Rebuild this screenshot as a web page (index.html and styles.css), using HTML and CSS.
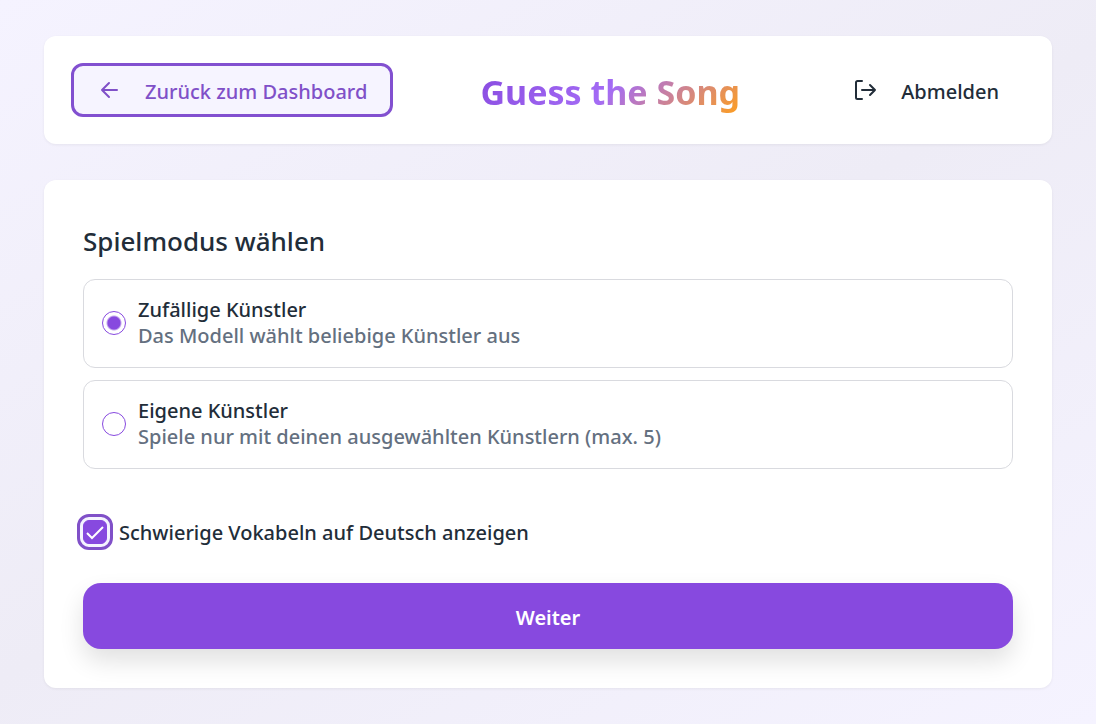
FILE: index.html
```html
<!DOCTYPE html>
<html lang="de">
<head>
  <meta charset="UTF-8">
  <meta name="viewport" content="width=device-width, initial-scale=1.0">
  <title>Guess the Song</title>
  <link rel="stylesheet" href="styles.css">
</head>
<body>
  <!-- Header -->
  <header class="card header">
    <a class="nav-link back-link" href="#dashboard">
      <svg class="icon" viewBox="0 0 24 24" aria-hidden="true">
        <path d="M20 12H5M12 5l-7 7 7 7"/>
      </svg>
      <span>Zurück zum Dashboard</span>
    </a>

    <h1 class="title">Guess the Song</h1>

    <button class="nav-link logout" type="button">
      <svg class="icon" viewBox="0 0 24 24" aria-hidden="true">
        <path d="M9 3H4.500a1.500 1.500 0 0 0-1.500 1.500v15a1.500 1.500 0 0 0 1.500 1.500H9M9 12h13M17 7l5 5-5 5"/>
      </svg>
      <span>Abmelden</span>
    </button>
  </header>

  <!-- Game mode form -->
  <main class="card">
    <form class="mode-form">
      <h2 id="mode-heading">Spielmodus wählen</h2>

      <div class="options" role="radiogroup" aria-labelledby="mode-heading">
        <label class="option" for="mode_random">
          <input class="radio" type="radio" id="mode_random" name="mode" value="random" checked>
          <span class="option-text">
            <span>Zufällige Künstler</span>
            <span class="hint">Das Modell wählt beliebige Künstler aus</span>
          </span>
        </label>

        <label class="option" for="mode_custom">
          <input class="radio" type="radio" id="mode_custom" name="mode" value="custom">
          <span class="option-text">
            <span>Eigene Künstler</span>
            <span class="hint">Spiele nur mit deinen ausgewählten Künstlern (max. 5)</span>
          </span>
        </label>
      </div>

      <div class="vocab">
        <span class="check">
          <input class="checkbox" type="checkbox" id="vocab" name="vocab" checked>
          <svg class="tick" viewBox="0 0 24 24" aria-hidden="true">
            <path d="M4 13l5 5L20 7"/>
          </svg>
        </span>
        <label for="vocab">Schwierige Vokabeln auf Deutsch anzeigen</label>
      </div>

      <button class="submit" type="submit">Weiter</button>
    </form>
  </main>
</body>
</html>
```

FILE: styles.css
```css
* {
  box-sizing: border-box;
}
body {
  margin: 0;
  padding: 36px 44px;
  min-height: 100vh;
  font-family: "Segoe UI", "Noto Sans", sans-serif;
  font-size: 20px;
  font-weight: 500;
  line-height: 26px;
  color: #222d39;
  background: linear-gradient(150deg, #f5f3ff 0%, #eeecf6 50%, #f5f3ff 100%);
}
.card {
  background-color: white;
  border-radius: 12px;
  box-shadow: 0 1px 3px rgba(0, 0, 0, 0.06);
}
.header {
  display: flex;
  align-items: center;
  justify-content: space-between;
  padding: 27px;
  margin-bottom: 36px;
}
.nav-link {
  display: flex;
  align-items: center;
  gap: 24px;
  height: 54px;
  padding: 0 23px;
  border: 3px solid transparent;
  border-radius: 12px;
  background: none;
  font: inherit;
  color: inherit;
  text-decoration: none;
  cursor: pointer;
}
.nav-link span {
  padding-top: 3px;
}
.back-link {
  border-color: #8250d0;
  background-color: #f6f4ff;
  color: #8050c8;
}
.icon {
  width: 24px;
  height: 24px;
  fill: none;
  stroke: currentColor;
  stroke-width: 2;
  stroke-linecap: round;
  stroke-linejoin: round;
}
.title {
  margin: 0;
  padding-top: 4px;
  font-size: 34px;
  font-weight: 700;
  line-height: 48px;
  color: transparent;
  background: linear-gradient(135deg, #8749df 0%, #a46cf5 50%, #ff9f1c 100%);
  background-clip: text;
  -webkit-background-clip: text;
}
.mode-form {
  padding: 39px;
}
h2 {
  margin: 0 0 15px;
  font-size: 26px;
  font-weight: 500;
  line-height: 45px;
}
.options {
  display: flex;
  flex-direction: column;
  gap: 12px;
}
.option {
  display: flex;
  align-items: center;
  gap: 12px;
  padding: 17px 18px 18px;
  border: 1px solid #d9dadf;
  border-radius: 12px;
  cursor: pointer;
}
.option-text {
  display: flex;
  flex-direction: column;
}
.hint {
  color: #647080;
}
.radio {
  appearance: none;
  width: 24px;
  height: 24px;
  margin: 0;
  border: 1px solid #8749df;
  border-radius: 50%;
}
.radio:checked {
  background: radial-gradient(circle, #8749df 6px, transparent 8px);
}
.vocab {
  display: flex;
  align-items: center;
  gap: 12px;
  margin: 49px 0 37px;
}
.vocab label {
  padding-top: 2px;
}
.check {
  display: grid;
}
.checkbox,
.tick {
  grid-area: 1 / 1;
  width: 24px;
  height: 24px;
}
.checkbox {
  appearance: none;
  margin: 0;
  border: 1px solid #8749df;
  border-radius: 6px;
  outline: 3px solid #8050c8;
  outline-offset: 3px;
  box-shadow: 0 0 0 3px #f5f3ff;
}
.checkbox:checked {
  background-color: #8749df;
}
.tick {
  position: relative;
  fill: none;
  stroke: white;
  stroke-width: 2;
  pointer-events: none;
}
.submit {
  width: 100%;
  height: 66px;
  padding: 3px 0 0;
  border: none;
  border-radius: 18px;
  background-color: #8749df;
  box-shadow: 0 12px 24px rgba(0, 0, 0, 0.12);
  color: white;
  font: inherit;
  font-weight: 600;
  cursor: pointer;
}
```
